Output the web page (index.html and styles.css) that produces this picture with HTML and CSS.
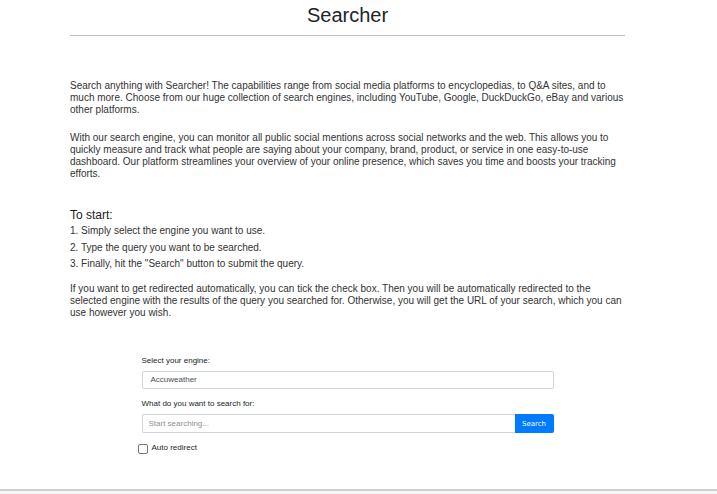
FILE: index.html
```html
<!DOCTYPE html>
<html lang="en">
<head>
<meta charset="utf-8">
<title>Searcher</title>
<link rel="stylesheet" href="styles.css">
</head>
<body>
<div class="page">
  <header class="header">
    <h1 class="title">Searcher</h1>
    <hr class="rule">
  </header>
  <main class="content">
    <p class="para">Search anything with Searcher! The capabilities range from social media platforms to encyclopedias, to Q&amp;A sites, and to much more. Choose from our huge collection of search engines, including YouTube, Google, DuckDuckGo, eBay and various other platforms.</p>
    <p class="para para-second">With our search engine, you can monitor all public social mentions across social networks and the web. This allows you to quickly measure and track what people are saying about your company, brand, product, or service in one easy-to-use dashboard. Our platform streamlines your overview of your online presence, which saves you time and boosts your tracking efforts.</p>
    <h2 class="start-title">To start:</h2>
    <ol class="steps">
      <li>1. Simply select the engine you want to use.</li>
      <li>2. Type the query you want to be searched.</li>
      <li>3. Finally, hit the "Search" button to submit the query.</li>
    </ol>
    <p class="para">If you want to get redirected automatically, you can tick the check box. Then you will be automatically redirected to the selected engine with the results of the query you searched for. Otherwise, you will get the URL of your search, which you can use however you wish.</p>
    <form class="form">
      <label class="label">Select your engine:</label>
      <div class="select">Accuweather</div>
      <label class="label label-second">What do you want to search for:</label>
      <div class="search-row">
        <input class="search-input" type="text" placeholder="Start searching...">
        <button class="search-btn" type="button">Search</button>
      </div>
      <label class="check-row">
        <span class="checkbox"></span>
        <span class="check-label">Auto redirect</span>
      </label>
    </form>
  </main>
</div>
<footer class="footer"></footer>
</body>
</html>
```

FILE: styles.css
```css
* { box-sizing: border-box; }
html, body { margin: 0; padding: 0; background: #fff; }
body {
  font-family: "Liberation Sans", Arial, sans-serif;
  color: #333;
  height: 494px;
  overflow: hidden;
  display: flex;
  flex-direction: column;
}
.page {
  width: 555px;
  margin-left: 70px;
  flex: 1;
}
.header { padding-top: 3px; }
.title {
  margin: 0;
  font-size: 20px;
  line-height: 24px;
  font-weight: 400;
  text-align: center;
  color: #212529;
}
.rule {
  margin: 8px 0 0;
  border: 0;
  border-top: 1px solid #bdbdbd;
  height: 0;
}
.content { padding-top: 44px; }
.para {
  margin: 0;
  font-size: 10px;
  line-height: 12px;
}
.para-second { margin-top: 16px; }
.start-title {
  margin: 27px 0 0;
  font-size: 12px;
  line-height: 16px;
  font-weight: 400;
  color: #222;
}
.steps {
  list-style: none;
  margin: 0 0 10.5px;
  padding: 0;
  font-size: 10px;
  line-height: 16.5px;
}
.form {
  width: 412px;
  margin: 37px auto 0;
  display: flex;
  flex-direction: column;
}
.label {
  font-size: 8px;
  line-height: 10px;
  color: #212529;
}
.label-second { margin-top: 10px; }
.select {
  margin-top: 5px;
  height: 18px;
  border: 1px solid #ced4da;
  border-radius: 2px;
  font-size: 8px;
  line-height: 16px;
  padding-left: 8px;
  color: #495057;
}
.search-row {
  margin-top: 5px;
  display: flex;
  height: 19px;
}
.search-input {
  flex: 1;
  min-width: 0;
  height: 19px;
  border: 1px solid #ced4da;
  border-right: 0;
  border-radius: 2px 0 0 2px;
  font-family: "Liberation Sans", Arial, sans-serif;
  font-size: 8px;
  padding: 0 6px;
  color: #495057;
  outline: none;
}
.search-input::placeholder { color: #8a9096; }
.search-btn {
  width: 39px;
  height: 19px;
  border: 0;
  border-radius: 0 2px 2px 0;
  background: #007bff;
  color: #fff;
  font-family: "DejaVu Sans", sans-serif;
  font-size: 7px;
  padding: 0;
}
.check-row {
  margin: 11px 0 0 -4px;
  display: flex;
  align-items: center;
  gap: 4px;
}
.checkbox {
  width: 10px;
  height: 10px;
  border: 1px solid #767676;
  border-radius: 2px;
  background: #fff;
}
.check-label {
  font-size: 8px;
  line-height: 10px;
  color: #212529;
  margin-top: -3px;
}
.footer {
  height: 5px;
  border-top: 2px solid #cfcfcf;
  background: #f7f7f7;
}
```
